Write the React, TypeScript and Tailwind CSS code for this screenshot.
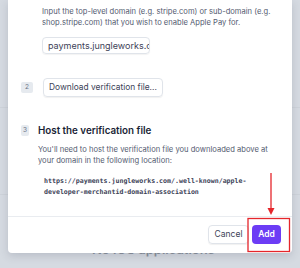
export default function App() {
  return (
    <div className="relative h-[268px] w-[300px] overflow-hidden bg-[#d5dae1] font-['Inter',sans-serif]">
      {/* page behind the dimmed overlay */}
      <div className="h-[108px] border-b border-[#cdd2d9]" />
      <div className="h-[87px] border-b border-[#cdd2d9]" />
      <div className="pl-[92px] pt-[47px] text-[13px] font-semibold leading-[14px] text-[#8a919c]">
        No iOS applications
      </div>

      {/* modal */}
      <div className="absolute left-[8px] top-0 z-10 w-[284px] rounded-b-[4px] bg-white shadow-[0_3px_8px_rgba(60,66,87,0.18)]">
        <div className="pl-[34px] pr-[10px] pt-[6px]">
          <p className="text-[7.6px] leading-[11px] text-[#545b70]">
            Input the top-level domain (e.g. stripe.com) or sub-domain (e.g. shop.stripe.com) that you wish to enable
            Apple Pay for.
          </p>
          <div className="mt-[9px] flex h-[17px] w-[108px] items-center overflow-hidden whitespace-nowrap rounded-[4px] border border-[#e0e4ea] px-[5px] text-[9px] text-[#3c4257] shadow-[0_1px_1px_rgba(0,0,0,0.05)]">
            payments.jungleworks.c
          </div>
        </div>

        <div className="mt-[24px] flex items-center pl-[13px]">
          <span className="flex h-[11px] w-[12px] items-center justify-center rounded-[2px] bg-[#e6eaef] text-[6.5px] text-[#697386]">
            2
          </span>
          <button className="ml-[10px] flex h-[19px] items-center rounded-[4px] border border-[#e0e4ea] px-[5px] text-[8.4px] text-[#3c4257] shadow-[0_1px_1px_rgba(0,0,0,0.06)]">
            Download verification file...
          </button>
        </div>

        <div className="mt-[27px] flex items-start pl-[13px]">
          <span className="mt-[1px] flex h-[11px] w-[12px] items-center justify-center rounded-[2px] bg-[#e6eaef] text-[6.5px] text-[#697386]">
            3
          </span>
          <div className="ml-[9px] pr-[10px]">
            <h3 className="text-[9.8px] font-semibold leading-[14px] text-[#1a1f36]">Host the verification file</h3>
            <p className="mt-[6px] text-[7.6px] leading-[11px] text-[#545b70]">
              You&apos;ll need to host the verification file you downloaded above at your domain in the following
              location:
            </p>
            <p className="mt-[10px] pl-[6px] font-['DejaVu_Sans_Mono',monospace] text-[6.6px] font-bold leading-[11px] text-[#3c4257]">
              https://payments.jungleworks.com/.well-known/apple-
              <br />
              developer-merchantid-domain-association
            </p>
          </div>
        </div>

        <div className="mt-[18px] flex justify-end gap-[3px] border-t border-[#e9ecf0] pb-[9px] pr-[11px] pt-[8px]">
          <button className="flex h-[19px] w-[41px] items-center justify-center rounded-[4px] border border-[#e0e4ea] text-[8.5px] text-[#3c4257] shadow-[0_1px_1px_rgba(0,0,0,0.06)]">
            Cancel
          </button>
          <button className="flex h-[19px] w-[29px] items-center justify-center rounded-[4px] bg-[#6c3cf5] text-[8.5px] font-semibold text-white">
            Add
          </button>
        </div>
      </div>

      {/* red annotation */}
      <svg className="absolute left-0 top-0 z-20" width="300" height="268" viewBox="0 0 300 268">
        <line x1="271" y1="173" x2="271" y2="210" stroke="#e5262b" strokeWidth="1.3" />
        <polygon points="267.5,208 274.5,208 271,215" fill="#e5262b" />
        <rect x="248" y="218.5" width="41.5" height="33" fill="none" stroke="#e5262b" strokeWidth="1.3" />
      </svg>
    </div>
  );
}
